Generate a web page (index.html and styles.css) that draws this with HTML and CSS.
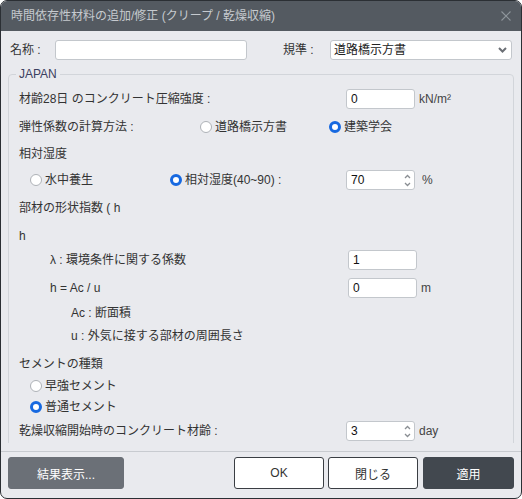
FILE: index.html
```html
<!DOCTYPE html>
<html lang="ja">
<head>
<meta charset="utf-8">
<title>時間依存性材料の追加/修正</title>
<link rel="stylesheet" href="styles.css">
</head>
<body>
<div class="dialog">
  <div class="titlebar">
    <span class="title">時間依存性材料の追加/修正 (クリープ / 乾燥収縮)</span>
    <svg class="close" width="10" height="10" viewBox="0 0 10 10"><path d="M0.5 0.5L9.5 9.5M9.5 0.5L0.5 9.5" stroke="#8d949a" stroke-width="1.1" fill="none"/></svg>
  </div>
  <div class="body">
    <div class="name-row">
      <span class="lbl-name">名称 :</span>
      <div class="input name-input"></div>
      <span class="lbl-std">規準 :</span>
      <div class="input select"><span class="sel-text">道路橋示方書</span><svg width="9" height="6" viewBox="0 0 9 6"><path d="M1 1L4.5 4.5L8 1" stroke="#6b6f75" stroke-width="2" fill="none"/></svg></div>
    </div>
    <fieldset class="group">
      <legend>JAPAN</legend>
      <div class="row h28">
        <span class="lbl w-main">材齢28日 のコンクリート圧縮強度 :</span>
        <div class="input num"><span class="val">0</span></div>
        <span class="unit">kN/m²</span>
      </div>
      <div class="row h27">
        <span class="lbl w-calc">弾性係数の計算方法 :</span>
        <span class="opt w-opt1"><span class="radio"></span>道路橋示方書</span>
        <span class="opt"><span class="radio on"></span>建築学会</span>
      </div>
      <div class="row h26">
        <span class="lbl">相対湿度</span>
      </div>
      <div class="row h28 ind1">
        <span class="opt w-opt2"><span class="radio"></span>水中養生</span>
        <span class="opt w-opt3"><span class="radio on"></span>相対湿度(40~90) :</span>
        <div class="input num"><span class="val">70</span><svg class="spin" width="7" height="13" viewBox="0 0 7 13"><path d="M1 4L3.5 1.5L6 4M1 9L3.5 11.5L6 9" stroke="#8a8e93" stroke-width="1.3" fill="none"/></svg></div>
        <span class="unit unit-pct">%</span>
      </div>
      <div class="row h28">
        <span class="lbl">部材の形状指数 ( h</span>
      </div>
      <div class="row h24">
        <span class="lbl">h</span>
      </div>
      <div class="row h28 ind2">
        <span class="lbl w-lam">λ : 環境条件に関する係数</span>
        <div class="input num"><span class="val">1</span></div>
      </div>
      <div class="row h25 ind2">
        <span class="lbl w-lam">h = Ac / u</span>
        <div class="input num"><span class="val">0</span></div>
        <span class="unit">m</span>
      </div>
      <div class="row h23 ind3">
        <span class="lbl">Ac : 断面積</span>
      </div>
      <div class="row h28 ind3">
        <span class="lbl">u : 外気に接する部材の周囲長さ</span>
      </div>
      <div class="row h22">
        <span class="lbl">セメントの種類</span>
      </div>
      <div class="row h21 ind1">
        <span class="opt"><span class="radio"></span>早強セメント</span>
      </div>
      <div class="row h24 ind1">
        <span class="opt"><span class="radio on"></span>普通セメント</span>
      </div>
      <div class="row h28">
        <span class="lbl w-main">乾燥収縮開始時のコンクリート材齢 :</span>
        <div class="input num"><span class="val">3</span><svg class="spin" width="7" height="13" viewBox="0 0 7 13"><path d="M1 4L3.5 1.5L6 4M1 9L3.5 11.5L6 9" stroke="#8a8e93" stroke-width="1.3" fill="none"/></svg></div>
        <span class="unit">day</span>
      </div>
      <div class="row h28"></div>
    </fieldset>
  </div>
  <div class="footer">
    <button class="btn btn-gray">結果表示...</button>
    <div class="spacer"></div>
    <button class="btn btn-white">OK</button>
    <button class="btn btn-white">閉じる</button>
    <button class="btn btn-dark">適用</button>
  </div>
</div>
</body>
</html>
```
FILE: styles.css
```css
html, body {
  margin: 0;
  padding: 0;
  background: #ffffff;
}
body {
  font-family: "Liberation Sans", "Noto Sans CJK JP", sans-serif;
  font-size: 12px;
  line-height: 16px;
  color: #333333;
}
.dialog {
  width: 522px;
  height: 499px;
  box-sizing: border-box;
  border: 1px solid #2b2f34;
  border-radius: 7px;
  overflow: hidden;
  background: #e9eaee;
  display: flex;
  flex-direction: column;
}
.titlebar {
  flex: none;
  height: 30px;
  background: #545a61;
  display: flex;
  align-items: center;
  justify-content: space-between;
  padding: 0 10px;
}
.title {
  color: #c6cacf;
  font-size: 12px;
}
.close {
  display: block;
}
.body {
  flex: 1;
  min-height: 0;
  overflow: hidden;
  padding: 9px 7px 0;
  margin-bottom: 8px;
}
.name-row {
  display: flex;
  align-items: center;
  height: 20px;
  padding: 0 2px;
}
.lbl-name {
  width: 45px;
}
.lbl-std {
  width: 47px;
  margin-left: 36px;
}
.input {
  box-sizing: border-box;
  height: 20px;
  background: #ffffff;
  border: 1px solid #c3c7cc;
  border-radius: 3px;
  display: flex;
  align-items: center;
}
.name-input {
  width: 192px;
}
.select {
  width: 182px;
  padding: 0 4px 0 3px;
  justify-content: space-between;
}
.sel-text {
  color: #222;
}
.group {
  margin: 6px 0 0;
  border: 1px solid #d2d5da;
  border-radius: 4px;
  padding: 7px 0 0 10px;
}
.group legend {
  padding: 0 3px;
  margin-left: -3px;
  color: #3b4060;
  line-height: 16px;
}
.row {
  display: flex;
  align-items: flex-start;
}
.row > * {
  height: 20px;
  display: flex;
  align-items: center;
}
.h28 { height: 28px; }
.h27 { height: 27px; }
.h26 { height: 26px; }
.h25 { height: 25px; }
.h24 { height: 24px; }
.h23 { height: 23px; }
.h22 { height: 22px; }
.h21 { height: 21px; }
.ind1 { padding-left: 11px; }
.ind2 { padding-left: 31px; }
.ind3 { padding-left: 52px; }
.w-main { width: 327px; flex: none; }
.w-calc { width: 181px; flex: none; }
.w-opt1 { width: 129px; flex: none; }
.w-opt2 { width: 140px; flex: none; }
.w-opt3 { width: 176px; flex: none; }
.w-lam { width: 298px; flex: none; }
.num {
  width: 69px;
  flex: none;
  padding: 0 3px 0 4px;
  justify-content: space-between;
}
.val {
  color: #111;
}
.spin {
  display: block;
}
.unit {
  margin-left: 4px;
  color: #444;
}
.unit-pct {
  margin-left: 7px;
}
.opt {
  display: flex;
  align-items: center;
}
.radio {
  width: 12px;
  height: 12px;
  box-sizing: border-box;
  border-radius: 50%;
  border: 1px solid #aeb2b7;
  background: #ffffff;
  margin-right: 3px;
  flex: none;
}
.radio.on {
  border: 3.5px solid #1769e0;
}
.footer {
  flex: none;
  border-top: 1px solid #c8cbd0;
  padding: 5px 7px 9px;
  display: flex;
  gap: 4px;
}
.spacer {
  flex: 1;
}
.btn {
  height: 32px;
  box-sizing: border-box;
  border-radius: 3px;
  font-family: inherit;
  font-size: 12px;
  padding: 0;
  cursor: default;
}
.btn-gray {
  width: 116px;
  background: #6b7077;
  border: 1px solid #6b7077;
  color: #ffffff;
}
.btn-white {
  width: 90px;
  background: #ffffff;
  border: 1px solid #3a3e43;
  color: #333;
}
.btn-dark {
  width: 91px;
  margin-left: 1px;
  background: #42484f;
  border: 1px solid #42484f;
  color: #ffffff;
}
```
